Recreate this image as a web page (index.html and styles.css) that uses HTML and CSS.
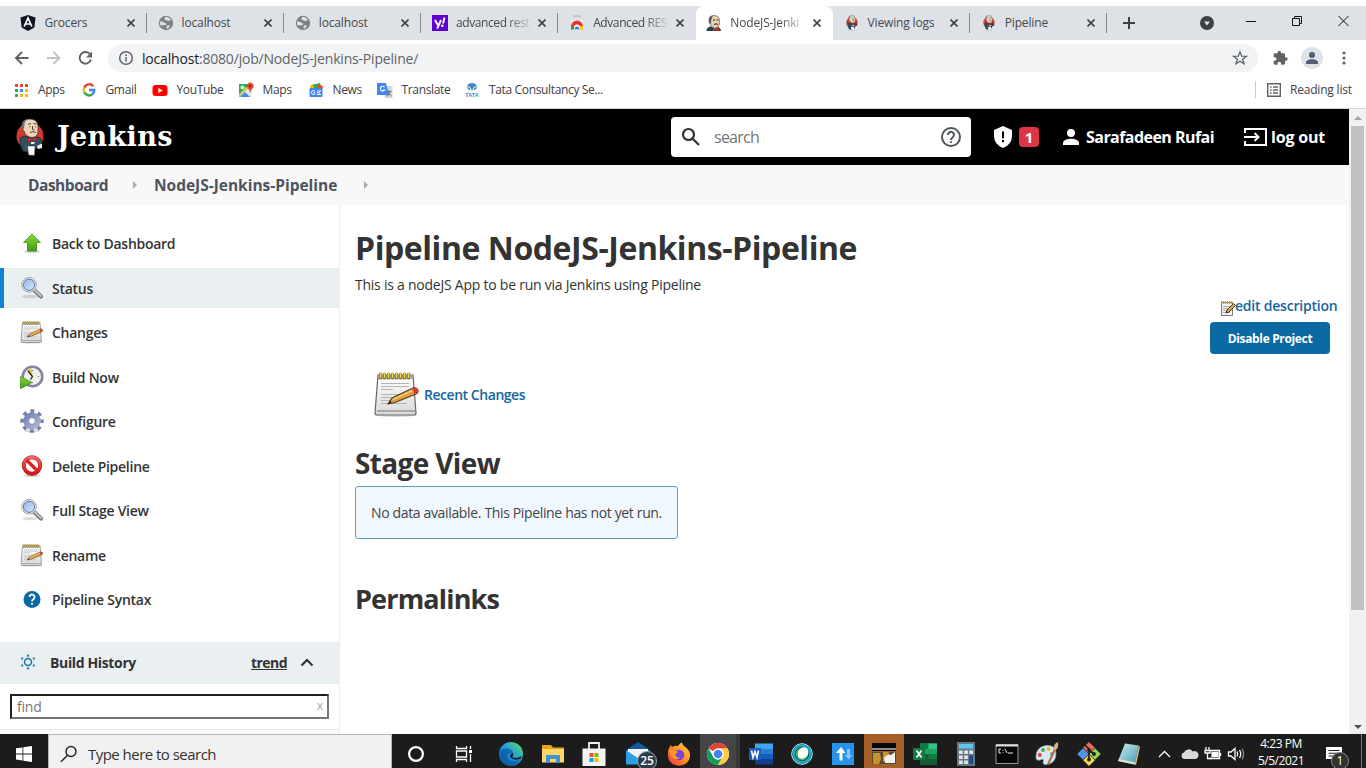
FILE: index.html
```html
<!DOCTYPE html>
<html lang="en">
<head>
<meta charset="utf-8">
<title>NodeJS-Jenkins-Pipeline [Jenkins]</title>
<link rel="stylesheet" href="styles.css">
</head>
<body>
<svg class="defs" width="0" height="0" aria-hidden="true">
  <defs>
    <linearGradient id="g-green" x1="0" y1="0" x2="0" y2="1"><stop offset="0" stop-color="#8fdc3c"/><stop offset="1" stop-color="#3f9d12"/></linearGradient>
    <linearGradient id="g-gear" x1="0" y1="0" x2="1" y2="1"><stop offset="0" stop-color="#6f86b8"/><stop offset="1" stop-color="#b3b4cf"/></linearGradient>
    <linearGradient id="g-red" x1="0" y1="0" x2="0" y2="1"><stop offset="0" stop-color="#ee6a66"/><stop offset="1" stop-color="#d01414"/></linearGradient>
    <linearGradient id="g-lens" x1="0" y1="0" x2="1" y2="1"><stop offset="0" stop-color="#8fb4e2"/><stop offset="1" stop-color="#d9eafb"/></linearGradient>
    <linearGradient id="g-paper" x1="0" y1="0" x2="0" y2="1"><stop offset="0" stop-color="#ffffff"/><stop offset="1" stop-color="#d8d8d8"/></linearGradient>
    <linearGradient id="g-edge" x1="0" y1="1" x2="1" y2="0"><stop offset="0" stop-color="#0c59a4"/><stop offset=".5" stop-color="#1b9de2"/><stop offset="1" stop-color="#66dd5a"/></linearGradient>
    <linearGradient id="g-fox" x1="1" y1="0" x2="0" y2="1"><stop offset="0" stop-color="#ffe14a"/><stop offset=".5" stop-color="#ff8a1e"/><stop offset="1" stop-color="#f0304f"/></linearGradient>
    <linearGradient id="g-note" x1="0" y1="0" x2="1" y2="1"><stop offset="0" stop-color="#cfeef2"/><stop offset="1" stop-color="#3f99ad"/></linearGradient>
  </defs>
  <symbol id="x" viewBox="0 0 8 8"><path d="M.5.5l7 7M7.500.5l-7 7" stroke="#3c4043" stroke-width="1.6"/></symbol>
  <symbol id="globe" viewBox="0 0 16 16"><circle cx="8" cy="8" r="7.200" fill="#7f8082"/><path d="M2 6.500C5 6 6 7.500 8 8.500c1 .6-.3 2-2 1.800C3.800 10 3 11 2.200 10zM7.500 1.800c2 .1 4.500 1 5.600 3.500-1.200-.5-1.800.8-3.200.6C8.500 5.700 8 5 6.800 4.800c-.8-.6 0-2 .7-3zM9 10.500c1.200-.6 2-.2 3 .3-.6 1.600-2 2.700-3.300 3.100-.2-1.200-.4-2.500.3-3.400z" fill="#dee1e6"/></symbol>
  <symbol id="butler" viewBox="0 0 28 38">
    <ellipse cx="14" cy="18" rx="13.500" ry="13.500" fill="#d33833"/>
    <path d="M4 20q5-3 9-1l4 1q6-2 8 1l1 6q-3 4-8 4l-1 3q-6 1-10-1-3-4-3-13z" fill="#335061" stroke="#14202a" stroke-width=".7"/>
    <path d="M6 8Q6 1 13.500 1q8 0 8.500 7v5q0 6-6 6.500-6-.5-8-6.500-2-1-2-6z" fill="#f0d6b7" stroke="#3b2f26" stroke-width=".7"/>
    <path d="M6 10Q4.500 3 11 1.500q-3 3-2.500 5.500l-.6 4z" fill="#68707a"/>
    <path d="M12 6.500l3-1M17.500 5.500l3 .5M16.500 8v3.500l2 .3M14 14.500q3-1.800 6 0M13.500 8.800h1M19 8.800h1" stroke="#231f20" stroke-width=".8" fill="none"/>
    <path d="M12 19.500l4 1.500 4-1.500 1 3.500-5-1-4 2z" fill="#d33833" stroke="#7a1916" stroke-width=".5"/>
    <path d="M11.500 28h7.500l-.5 9.500-6-.5z" fill="#fff" stroke="#333" stroke-width=".5"/><path d="M21 28l5-2.500v4.500l-4 1zM15 24h4l-1 2h-3z" fill="#f3f3f3"/>
  </symbol>
  <symbol id="lens" viewBox="0 0 24 24"><ellipse cx="10" cy="20.500" rx="8" ry="1.800" fill="#000" opacity=".13"/><path d="M13.500 13.500l7.500 7" stroke="#777" stroke-width="4.200" stroke-linecap="round"/><path d="M14 13.500l7 6.600" stroke="#c8c8c8" stroke-width="1.800" stroke-linecap="round"/><circle cx="9" cy="8.800" r="7.300" fill="#f4f4f4" stroke="#999" stroke-width=".9"/><circle cx="9" cy="8.800" r="5.600" fill="url(#g-lens)" stroke="#5479ad" stroke-width="1"/></symbol>
  <symbol id="notepad" viewBox="0 0 48 48"><ellipse cx="23" cy="45" rx="19" ry="2" fill="#000" opacity=".14"/><path d="M5 5h35l3 38q0 2-2 2H4q-2 0-2-2z" fill="url(#g-paper)" stroke="#666" stroke-width="1.200"/><path d="M4 41h38" stroke="#9a9a9a" stroke-width="1.500"/><path d="M5 5.500h35v3.500H5z" fill="#a8a8a8"/><path d="M7.500 4v4M11.500 4v4M15.500 4v4M19.500 4v4M23.500 4v4M27.500 4v4M31.500 4v4M35.500 4v4" stroke="#8a7216" stroke-width="3.200" stroke-linecap="round"/><path d="M7.500 3v5M11.500 3v5M15.500 3v5M19.500 3v5M23.500 3v5M27.500 3v5M31.500 3v5M35.500 3v5" stroke="#f0d848" stroke-width="1.500"/><path d="M8 13.500h28M8 16.500h28M8 19.500h12M8 24.500h27M8 27.500h22M8 30.500h10M8 33.500h26" stroke="#b5b5b5" stroke-width="1"/><path d="M15 34l4-6L40 18q4-1 5 2 .5 2.500-2 4L22 32.500z" fill="#d99f3f" stroke="#5c3d10" stroke-width="1.100"/><path d="M20 29.500l19-9" stroke="#f4cd78" stroke-width="1.500"/><path d="M39.500 18.300l1.500-.6q3-.8 4 2 .5 2.500-2 4l-1.500.6z" fill="#dd3a3a"/><path d="M15 34l2-3.500 1.500 2z" fill="#222"/></symbol>
  <symbol id="doc-small" viewBox="0 0 16 16"><path d="M1.500 2.500h11v13h-11z" fill="#f4f4f4" stroke="#777"/><path d="M1 2.500h12" stroke="#c8a827" stroke-width="3" stroke-dasharray="1.300 .7"/><path d="M3 6.500h7M3 8.500h5M3 10.500h4M3 12.500h7" stroke="#aaa"/><path d="M6 13l1-3 6.500-6.500 2 2L9 12z" fill="#dba74a" stroke="#4a3519" stroke-width="1"/></symbol>
</svg>

<div class="tabstrip">
  <div class="tab"><svg class="fav" viewBox="0 0 16 16"><path d="M8 0l7.500 2.600-1.100 10L8 16l-6.400-3.400L.5 2.600z" fill="#111722"/><path d="M4.200 11.500L8 3l3.800 8.500M5.800 9h4.400" fill="none" stroke="#fff" stroke-width="1.700"/></svg><span class="tt">Grocers</span><svg class="close"><use href="#x"/></svg></div>
  <div class="tab"><svg class="fav"><use href="#globe"/></svg><span class="tt">localhost</span><svg class="close"><use href="#x"/></svg></div>
  <div class="tab"><svg class="fav"><use href="#globe"/></svg><span class="tt">localhost</span><svg class="close"><use href="#x"/></svg></div>
  <div class="tab"><svg class="fav" viewBox="0 0 16 16"><path d="M0 0h16v16H0z" fill="#5f01d1"/><path d="M3 5l2.800 5M9 5l-3.800 8.500M12.500 2.500L11 8.500" stroke="#fff" stroke-width="1.900"/><circle cx="10.300" cy="10.800" r="1.200" fill="#fff"/></svg><span class="tt fade tight">advanced rest</span><svg class="close"><use href="#x"/></svg></div>
  <div class="tab nosep"><svg class="fav" viewBox="0 0 16 16"><path d="M2 5h12v9.500H2z" fill="#e9ebee"/><path d="M5.500 2.500V1h5v1.500" stroke="#c4c6c9" stroke-width="2" fill="none"/><path d="M2 14.500v-3a6 6 0 0 1 12 0v.5H8z" fill="#e33b2e"/><path d="M2 14.500v-4q2 0 3.500 4z" fill="#27a552"/><path d="M14 14.500v-3.500H9l1.500 3.500z" fill="#fbc116"/><circle cx="8" cy="12.500" r="2.900" fill="#fff"/><path d="M5.800 14.500a2.300 2.300 0 1 1 4.400 0z" fill="#3f7ee8"/></svg><span class="tt fade tight">Advanced RES</span><svg class="close"><use href="#x"/></svg></div>
  <div class="tab active"><svg class="fav" viewBox="0 0 16 16"><path d="M.5 16q0-4 4-4.500h6q4 .5 4.500 4.500z" fill="#26404f"/><path d="M3 5Q3 .5 8 .5t5.500 4.500v4Q13 13 9 13.300 5 12.500 4 9 3 8 3 5z" fill="#ecd0ae" stroke="#5c5148" stroke-width=".6"/><path d="M3.200 8Q1.500 1.500 7 .7 5 3 5 9z" fill="#4e5760"/><path d="M7 5h2M10.500 5h2M8 9.500q2-1.500 4 0" stroke="#222" fill="none"/><path d="M7 13l3 1 3-1v3l-3-1-3 1z" fill="#d32f2f"/></svg><span class="tt fade">NodeJS-Jenki</span><svg class="close"><use href="#x"/></svg></div>
  <div class="tab"><svg class="fav"><use href="#butler"/></svg><span class="tt">Viewing logs</span><svg class="close"><use href="#x"/></svg></div>
  <div class="tab"><svg class="fav"><use href="#butler"/></svg><span class="tt">Pipeline</span><svg class="close"><use href="#x"/></svg></div>
  <svg class="plus" viewBox="0 0 12 12"><path d="M6 0v12M0 6h12" stroke="#3c4043" stroke-width="2"/></svg>
  <svg class="caret" viewBox="0 0 14 14"><circle cx="7" cy="7" r="7" fill="#3c4043"/><path d="M4 5.500h6L7 9.500z" fill="#dee1e6"/></svg>
  <svg class="win" width="104" height="12" viewBox="0 0 104 12" fill="none" stroke="#111"><path d="M0 6.500h10"/><path d="M46.500 3.500h7v7h-7zM48.500 3.500v-2h7v7h-2"/><path d="M92.500 1l10 10M102.500 1l-10 10"/></svg>
</div>

<div class="toolbar">
  <svg class="nav" width="80" height="16" viewBox="0 0 80 16" fill="none" stroke="#5f6368" stroke-width="1.900"><path d="M14.500 8H2M8 2L2 8l6 6"/><path d="M33 8h12.500M39.500 2l6 6-6 6" stroke="#bdc1c6"/><path d="M76 4.200A5.800 5.800 0 1 0 77 9.500"/><path d="M78 1.500v6h-6z" fill="#5f6368" stroke="none"/></svg>
  <div class="omnibox">
    <svg width="16" height="16" viewBox="0 0 16 16" fill="none" stroke="#5f6368" stroke-width="1.500"><circle cx="8" cy="8" r="6.300"/><path d="M8 7v4.500M8 4.300v1.600"/></svg>
    <span class="url"><b>localhost</b>:8080/job/NodeJS-Jenkins-Pipeline/</span>
    <svg class="star" width="16" height="16" viewBox="0 0 16 16" fill="none" stroke="#5f6368" stroke-width="1.300"><path d="M8 1.800l1.700 4.400 4.700.2-3.700 2.900 1.300 4.500L8 11.200l-4 2.600 1.300-4.500L1.600 6.400l4.700-.2z"/></svg>
  </div>
  <svg class="puzzle" width="16" height="16" viewBox="0 0 24 24"><path fill="#5f6368" d="M21 11h-1.500V7a2 2 0 0 0-2-2h-4V3.500a2.500 2.500 0 0 0-5 0V5h-4a2 2 0 0 0-2 2v3.800H4a2.700 2.700 0 0 1 0 5.400H2.500V20a2 2 0 0 0 2 2h3.800v-1.500a2.700 2.700 0 0 1 5.400 0V22h3.800a2 2 0 0 0 2-2v-4H21a2.500 2.500 0 0 0 0-5z"/></svg>
  <svg class="avatar" width="22" height="22" viewBox="0 0 22 22"><circle cx="11" cy="11" r="11" fill="#dee1e6"/><circle cx="11" cy="8" r="3" fill="#535c75"/><path d="M5 17v-1.500C5 13 9 12.300 11 12.300s6 .7 6 3.200V17z" fill="#535c75"/></svg>
  <svg class="kebab" width="4" height="14" viewBox="0 0 4 14" fill="#5f6368"><circle cx="2" cy="2" r="1.600"/><circle cx="2" cy="7" r="1.600"/><circle cx="2" cy="12" r="1.600"/></svg>
</div>

<div class="bookmarks">
  <a class="bm b1"><svg viewBox="0 0 16 16"><path d="M2 2h3v3H2zM7 2h3v3H7zM12 2h3v3h-3z" fill="#ea4335"/><path d="M2 7h3v3H2zM2 12h3v3H2z" fill="#34a853"/><path d="M7 7h3v3H7z" fill="#4285f4"/><path d="M12 7h3v3h-3zM7 12h3v3H7zM12 12h3v3h-3z" fill="#fbbc04"/></svg><span>Apps</span></a>
  <a class="bm b2"><svg viewBox="0 0 16 16" fill="none" stroke-width="2.500"><path d="M12.300 4.200A5.300 5.300 0 0 0 3.300 5.700" stroke="#ea4335"/><path d="M3.300 5.700a5.300 5.300 0 0 0 0 4.700" stroke="#fbbc05"/><path d="M3.300 10.400a5.300 5.300 0 0 0 8.200 1.700" stroke="#34a853"/><path d="M11.500 12.100a5.300 5.300 0 0 0 1.800-4.100H8" stroke="#4285f4"/></svg><span>Gmail</span></a>
  <a class="bm b3"><svg viewBox="0 0 16 16"><rect x=".5" y="3" width="15" height="11" rx="3" fill="#f00"/><path d="M6.300 6l4.500 2.500-4.500 2.500z" fill="#fff"/></svg><span>YouTube</span></a>
  <a class="bm b4"><svg viewBox="0 0 16 16"><path d="M1 2h13v13H1z" fill="#34a853"/><path d="M1 15L13 3l1 1v11z" fill="#e8e8e8"/><path d="M2 15l5-5 5 5z" fill="#4285f4"/><path d="M1 13.500L12.500 2" stroke="#fbd14b" stroke-width="1.600"/><circle cx="4.500" cy="5.500" r="2" fill="#d6f3dd"/><path d="M12 11q-.3-3-2-4.500a3.300 3.300 0 1 1 4.500 0Q12.500 8 12 11z" fill="#ea4335"/><circle cx="12" cy="4.200" r="1.100" fill="#8c1d14"/></svg><span>Maps</span></a>
  <a class="bm b5"><svg viewBox="0 0 16 16"><path d="M3 3l9-2 2 6H3z" fill="#34a853"/><path d="M2 4l3-1 1 4H2z" fill="#fbbc04"/><path d="M10 2.500l5 1.500-1 4h-4z" fill="#ea4335"/><rect x="1.500" y="6" width="13" height="9" rx="1" fill="#4285f4"/><path d="M7 9.300a2 2 0 1 0 0 2.500v-1H5.500M9 9h4M9 10.800h3M9 12.500h4" stroke="#fff" fill="none"/></svg><span>News</span></a>
  <a class="bm b6"><svg viewBox="0 0 16 16"><path d="M5 4h10.500v12H8z" fill="#d6d8da"/><path d="M0 1h9l3 12H0z" fill="#4285f4"/><path d="M7.500 5a2.400 2.400 0 1 0 .3 3H5.500" stroke="#fff" stroke-width="1.100" fill="none"/><path d="M9.500 9.500h5M12 8v1.500M13.500 9.500q-1 3.500-4 4.500M11 10q1 3 3.500 4" stroke="#69777d" fill="none"/></svg><span>Translate</span></a>
  <a class="bm b7"><svg viewBox="0 0 16 16"><ellipse cx="8" cy="4.800" rx="5" ry="3.700" fill="#3d8cc4"/><path d="M7.300 9q0-4-3.800-4.500M8.700 9q0-4 3.800-4.500" stroke="#fff" stroke-width="1" fill="none"/><text x="1.200" y="14.500" class="tata">TATA</text></svg><span>Tata Consultancy Se...</span></a>
  <a class="bm reading"><svg viewBox="0 0 16 16" fill="none" stroke="#5f6368" stroke-width="1.400"><path d="M1.700 1.700h12.600v12.600H1.700z"/><path d="M4 5h1.500M7 5h5M4 8h1.500M7 8h5M4 11h1.500M7 11h5"/></svg><span>Reading list</span></a>
</div>

<div class="viewport">
  <div class="page">
    <header class="jheader">
      <svg class="mascot"><use href="#butler"/></svg>
      <span class="wordmark">Jenkins</span>
      <div class="search">
        <svg width="20" height="20" viewBox="0 0 20 20" fill="none" stroke="#333" stroke-width="2.200"><circle cx="7.500" cy="7.500" r="5.500"/><path d="M11.500 11.500l6.500 6.500"/></svg>
        <span class="ph">search</span>
        <svg width="22" height="22" viewBox="0 0 22 22" fill="none" stroke="#4d545d" stroke-width="2"><circle cx="11" cy="11" r="9"/><path d="M8 9a3 3 0 1 1 4.800 2.200Q11 12.500 11 14M11 15.200v1.900"/></svg>
      </div>
      <svg class="shield" width="20" height="22" viewBox="0 0 20 22"><path d="M10 0l9 4v6q0 8.500-9 12Q1 18.500 1 10V4z" fill="#fff"/><path d="M10 5.500v7M10 14v2.300" stroke="#000" stroke-width="2"/></svg>
      <span class="alert">1</span>
      <svg class="user" width="18" height="18" viewBox="0 0 18 18" fill="#fff"><circle cx="9" cy="5" r="4"/><path d="M1 17v-2c0-3 5-4.300 8-4.300s8 1.300 8 4.300v2z"/></svg>
      <span class="hl">Sarafadeen Rufai</span>
      <svg class="out" width="23" height="18" viewBox="0 0 23 18" fill="none" stroke="#fff" stroke-width="2"><path d="M1 5V1h21v16H1v-4M0 9h14M10.500 5l4 4-4 4"/></svg>
      <span class="hl logout">log out</span>
    </header>
    <nav class="crumbs"><span class="c1">Dashboard</span><i></i><span class="c2">NodeJS-Jenkins-Pipeline</span><i></i></nav>
    <div class="cols">
      <aside class="side">
        <div class="tasks">
          <a class="task"><svg viewBox="0 0 24 24"><ellipse cx="12" cy="20.500" rx="8" ry="1.500" fill="#000" opacity=".2"/><path d="M12 3l8.500 8.500h-4v8.500h-9v-8.500h-4z" fill="url(#g-green)" stroke="#3a8a14" stroke-width=".8"/></svg><span>Back to Dashboard</span></a>
          <a class="task on"><svg><use href="#lens"/></svg><span>Status</span></a>
          <a class="task"><svg><use href="#notepad"/></svg><span>Changes</span></a>
          <a class="task"><svg viewBox="0 0 24 24"><circle cx="12.500" cy="11.500" r="9.800" fill="#f0f0ee" stroke="#85859f" stroke-width="2.600"/><path d="M12.500 11.500L7 5.500q2-1.700 5-1.700z" fill="#e3c64a"/><path d="M8 6l4.500 5.500-2 3" stroke="#222" stroke-width="1.300" fill="none"/><path d="M12.500 5v1M19 11.500h-1M12.500 18v-1" stroke="#777"/><path d="M.5 11.500l11.500 6-11.500 6.200z" fill="url(#g-green)" stroke="#3a8a14" stroke-width=".7"/></svg><span>Build Now</span></a>
          <a class="task"><svg viewBox="0 0 24 24"><ellipse cx="12" cy="22" rx="8" ry="1.500" fill="#000" opacity=".15"/><circle cx="12" cy="12" r="9.700" fill="none" stroke="#7580b0" stroke-width="4" stroke-dasharray="3.810 3.810" stroke-dashoffset="1.900"/><circle cx="12" cy="12" r="6" fill="none" stroke="url(#g-gear)" stroke-width="5.500"/><circle cx="12" cy="12" r="3.300" fill="#fff" stroke="#7880a8" stroke-width=".8"/></svg><span>Configure</span></a>
          <a class="task"><svg viewBox="0 0 24 24"><ellipse cx="12" cy="21.500" rx="8" ry="1.500" fill="#000" opacity=".2"/><circle cx="12" cy="11.500" r="8.200" fill="#fff" stroke="#b91515" stroke-width="4"/><circle cx="12" cy="11.500" r="8.200" fill="none" stroke="url(#g-red)" stroke-width="3"/><path d="M6.500 6l11 11" stroke="#d92525" stroke-width="3.400"/></svg><span>Delete Pipeline</span></a>
          <a class="task"><svg><use href="#lens"/></svg><span>Full Stage View</span></a>
          <a class="task"><svg><use href="#notepad"/></svg><span>Rename</span></a>
          <a class="task"><svg viewBox="0 0 24 24"><circle cx="12" cy="12.500" r="8.500" fill="#0b6aa2"/><path d="M9.500 10a2.500 2.500 0 1 1 4 2Q12 13 12 14.500M12 16v1.700" stroke="#fff" stroke-width="1.800" fill="none"/></svg><span>Pipeline Syntax</span></a>
        </div>
        <div class="bh">
          <svg width="16" height="16" viewBox="0 0 16 16" fill="none" stroke="#1a73a8" stroke-width="1.500"><circle cx="8" cy="8" r="3.500"/><path d="M8 0l1.700 2.400H6.300zM8 16l1.700-2.400H6.300zM.8 3.500l2.800.3-1.500 2.600zM15.200 3.500l-2.800.3 1.500 2.600zM.8 12.500l2.800-.3-1.500-2.600zM15.200 12.500l-2.800-.3 1.500-2.600z" fill="#1a73a8" stroke="none"/></svg>
          <b>Build History</b><u>trend</u>
          <svg class="chev" width="14" height="9" viewBox="0 0 14 9" fill="none" stroke="#333" stroke-width="2.200"><path d="M1.500 7.500L7 2l5.500 5.500"/></svg>
        </div>
        <div class="find"><span>find</span><em>x</em></div>
        <div class="below"></div>
      </aside>
      <main class="main">
        <h1>Pipeline NodeJS-Jenkins-Pipeline</h1>
        <p class="desc">This is a nodeJS App to be run via Jenkins using Pipeline</p>
        <div class="actions">
          <a class="edit"><svg width="16" height="16"><use href="#doc-small"/></svg><span>edit description</span></a>
          <button class="btn">Disable Project</button>
        </div>
        <a class="recent"><svg width="48" height="48"><use href="#notepad"/></svg><span>Recent Changes</span></a>
        <h2>Stage View</h2>
        <div class="nodata">No data available. This Pipeline has not yet run.</div>
        <h2 class="perma">Permalinks</h2>
      </main>
    </div>
  </div>
  <div class="scroll"><i class="up"></i><div class="thumb"></div><i class="down"></i></div>
</div>

<div class="taskbar">
  <div class="start"><svg width="16" height="16" viewBox="0 0 16 16" fill="#fff"><path d="M0 2.300l6.500-.9v6.100H0zM7.300 1.300L16 0v7.500H7.300zM0 8.400h6.500v6.100L0 13.600zM7.300 8.400H16V16l-8.700-1.300z"/></svg></div>
  <div class="tsearch"><svg width="18" height="18" viewBox="0 0 18 18" fill="none" stroke="#222" stroke-width="1.400"><circle cx="11" cy="6.500" r="5"/><path d="M7.500 10.200L1 16.800"/></svg><span>Type here to search</span></div>
  <div class="apps">
    <div class="app a1"><svg viewBox="0 0 24 24"><circle cx="12" cy="12" r="6.900" fill="none" stroke="#fff" stroke-width="2.200"/></svg></div>
    <div class="app a2"><svg viewBox="0 0 24 24" fill="none" stroke="#fff" stroke-width="1.300"><path d="M4.500 4v2.500h10V4M4.500 9h10v6h-10zM4.500 20v-2.500h10V20M18.500 4v3M18.500 12v8"/><path d="M18.500 8v3" stroke-width="3"/></svg></div>
    <div class="app a3"><svg viewBox="0 0 24 24"><circle cx="12" cy="12" r="12" fill="url(#g-edge)"/><path d="M.3 12Q2 5.500 9 6.500q5 1 5 5.500-4-2-5.500 1.500Q8 18.500 14 19q5 .5 8-2.500Q18 24 11 24 1 22.500.3 12z" fill="#0c59a4" opacity=".75"/><path d="M14 11q1 2-1 4 5 2.500 9.500-1l-.5 2.500q-6 2.500-10-.5-3-3 2-5z" fill="#1c1c1c"/></svg></div>
    <div class="app a4"><svg viewBox="0 0 24 24"><path d="M1 3h9l2 2.500h11V20H1z" fill="#e8a317"/><path d="M1 7h22v13.500H1z" fill="#ffd766"/><path d="M5 21v-8h14v8h-4v-4H9v4z" fill="#3f94d8"/></svg></div>
    <div class="app a5"><svg viewBox="0 0 24 24"><path d="M7 7V1h10v6" fill="none" stroke="#eee" stroke-width="1.800"/><path d="M.5 6.500h23V24H.5z" fill="#f4f4f4"/><path d="M7.500 11h4v4h-4z" fill="#f25022"/><path d="M12.500 11h4v4h-4z" fill="#7fba00"/><path d="M7.500 16h4v4h-4z" fill="#00a4ef"/><path d="M12.500 16h4v4h-4z" fill="#ffb900"/></svg></div>
    <div class="app a6"><svg viewBox="0 0 24 24"><path d="M0 8l12-8 12 8v14H0z" fill="#0f5ba8"/><path d="M2 7h20v6l-10 5L2 13z" fill="#fff"/><path d="M0 8l12 8 12-8v14.500H0z" fill="#2d9fe6"/><path d="M2 7.500h20L12 14z" fill="#f2f2f2"/></svg><span class="count">25</span></div>
    <div class="app a7"><svg viewBox="0 0 24 24"><path d="M2 6l2-3 1 2q3-2 6-1Q13 1 15 .3q0 3 4 5.200Q23.500 9 23 14q-1 9-11 9.700Q2 23 1 14 .5 9 2 6z" fill="url(#g-fox)"/><circle cx="12" cy="13" r="5.200" fill="#7544dd"/><path d="M2 8q4-1 6 1l3 .5q-1 2-3 2.500 1 4 5 3.500-3 3-7 .5-3-3-4-8z" fill="#ff9a22"/></svg></div>
    <div class="app a8 current"><svg viewBox="0 0 24 24"><circle cx="12" cy="12" r="11" fill="#fff"/><path d="M12 1a11 11 0 0 1 9.530 5.500H12a5.500 5.500 0 0 0-4.760 2.750L2.470 6.500A11 11 0 0 1 12 1z" fill="#db4437"/><path d="M2.470 6.500A11 11 0 0 0 12 23l4.760-8.250A5.500 5.500 0 0 1 7.240 14.750z" fill="#0f9d58"/><path d="M21.530 6.500A11 11 0 0 1 12 23l4.760-8.250A5.500 5.500 0 0 0 12 6.500z" fill="#ffcd40"/><circle cx="12" cy="12" r="5.500" fill="#fff"/><circle cx="12" cy="12" r="4.300" fill="#4285f4"/></svg></div>
    <div class="app a9"><svg viewBox="0 0 24 24"><path d="M6 1.500h18v5.500H6z" fill="#41a5ee"/><path d="M6 7h18v5H6z" fill="#2b7cd3"/><path d="M6 12h18v5H6z" fill="#185abd"/><path d="M6 17h18v5.500H6z" fill="#103f91"/><path d="M0 6h12v12H0z" fill="#185abd"/><path d="M2.500 8.500l1.500 7 2-6 2 6 1.500-7" fill="none" stroke="#fff" stroke-width="1.600"/></svg></div>
    <div class="app a10"><svg viewBox="0 0 24 24"><circle cx="12" cy="12" r="10.300" fill="#0b3d53" stroke="#d5edf2" stroke-width="1"/><circle cx="12" cy="12" r="8.500" fill="none" stroke="#16abc6" stroke-width="2.600"/><circle cx="12" cy="12" r="6.500" fill="#4fae5b"/><ellipse cx="13" cy="11" rx="5" ry="6" transform="rotate(35 13 11)" fill="#fff"/></svg></div>
    <div class="app a11"><svg viewBox="0 0 24 24"><path d="M1 1h22v22H1z" fill="#2793ec"/><path d="M8.500 18.500h3V11h3L10 5l-5 6h3.500z" fill="#fff"/><path d="M16 7h3v6h2.300l-3.800 4.500L13.700 13H16z" fill="#8fc4f3"/></svg></div>
    <div class="app a12 flash"><svg viewBox="0 0 24 24"><path d="M0 1h24v8H0z" fill="#090909"/><path d="M0 7h24" stroke="#bbb" stroke-width="1.500"/><path d="M0 10h24v12H0z" fill="#55483e"/><path d="M1 22V11h7l1 6-2 5zM11 20V10h6l-1 7z" fill="#c79427"/><path d="M12 16q4-5 7-3l4-3v11H13z" fill="#f2f0ec"/></svg></div>
    <div class="app a13"><svg viewBox="0 0 24 24"><path d="M7 1.500h17v21H7z" fill="#21a366"/><path d="M7 1.500h8.500V7H7z" fill="#107c41"/><path d="M7 12h17v10.500H7z" fill="#185c37"/><path d="M15.500 12H24v5h-8.500z" fill="#107c41"/><path d="M15.500 1.500H24V7h-8.500z" fill="#33c481"/><path d="M0 6h12v12H0z" fill="#107c41"/><path d="M3.500 8.500l5 7M8.500 8.500l-5 7" stroke="#fff" stroke-width="1.700"/></svg></div>
    <div class="app a14"><svg viewBox="0 0 24 24"><path d="M3 0h18v24H3z" fill="#687784"/><path d="M5 2h14v4.500H5z" fill="#58c9f2"/><path d="M5 8.500h3.700v3.500H5zM10.200 8.500h3.700v3.500h-3.700zM15.300 8.500H19v3.500h-3.700zM5 13.500h3.700V17H5zM10.200 13.500h3.700V17h-3.700zM5 18.500h3.700V22H5zM10.200 18.500h3.700V22h-3.700z" fill="#dfe6ec"/><path d="M15.300 13.500H19V22h-3.700z" fill="#164b8f"/></svg></div>
    <div class="app a15"><svg viewBox="0 0 24 24"><path d="M1 2.500h22v19H1z" fill="#060606" stroke="#999" stroke-width="1"/><path d="M1 3.500h22" stroke="#ddd" stroke-width="2"/><path d="M6 7H4v4h2M8 8v.8M8 10v.8M10 7l2 4M13 11h5" stroke="#eee" stroke-width="1" fill="none"/></svg></div>
    <div class="app a16"><svg viewBox="0 0 24 24"><path d="M1 15Q1 5 11 3.500q10-.5 10 8 0 10-10 11-4 0-2.500-3.500Q9 16 5 18q-4 1-4-3z" fill="#d9e8f3" stroke="#8aa9bf" stroke-width=".8"/><circle cx="4.800" cy="13" r="2" fill="#e23d34"/><circle cx="8" cy="8" r="2" fill="#48a94b"/><circle cx="13.500" cy="7" r="2" fill="#f1b624"/><circle cx="17" cy="12" r="1.800" fill="#3b7fd4"/><path d="M13 22.500L20 7" stroke="#b5723a" stroke-width="2.200"/><path d="M18.500 7q0-5 4-7 2 4-1.500 8z" fill="#dcb27c"/></svg></div>
    <div class="app a17"><svg viewBox="0 0 24 24"><path d="M12 0l5.800 5.800L12 11.600 6.200 5.800z" fill="#ef6b5d"/><path d="M6 6.200l5.800 5.800L6 17.800.2 12z" fill="#4f94e8"/><path d="M18 6.200l5.800 5.800-5.800 5.800-5.800-5.800z" fill="#8bd650"/><path d="M12 12.400l5.800 5.800L12 24l-5.800-5.800z" fill="#f7d44d"/><path d="M8 3l4 4v11M12 8l5 4" stroke="#222" stroke-width="1.700" fill="none"/><circle cx="12" cy="8" r="1.900" fill="#222"/><circle cx="12" cy="17.500" r="1.900" fill="#222"/><circle cx="17" cy="12" r="1.900" fill="#222"/></svg></div>
    <div class="app a18"><svg viewBox="0 0 24 24"><path d="M8 1.500l14 2-4.500 19L1 19z" fill="url(#g-note)"/><path d="M22 3.500l1 1.500-4 18-1.500-.5z" fill="#d3bd8c"/><path d="M1 19l16.500 3.500.5-2L2 17z" fill="#e8e2d0"/></svg></div>
  </div>
  <svg class="tray" width="104" height="24" viewBox="0 0 104 24" fill="none" stroke="#fff" stroke-width="1.300"><path d="M10 15l5.500-5.500L21 15"/><path d="M35 17a3.300 3.300 0 0 1 0-6.400 5 5 0 0 1 8.700-1.200A4 4 0 0 1 47 17z" fill="#d8d8d8" stroke="none"/><path d="M60.500 8.500h10v8h-10"/><path d="M63 10.500h6v4h-6z" fill="#fff"/><path d="M71.500 11v3M57 5v3M60 5v3M56 8.500h5v2.500h-5zM58.500 11v5.500h4"/><path d="M79.500 10h2.500l4-3.500v11L82 14h-2.500z"/><path d="M88 9.500q1.500 2.500 0 5M90.500 8q2.500 4 0 8"/><path d="M93 6.500q3.300 5.500 0 11" stroke="#888"/></svg>
  <div class="clock"><span>4:23 PM</span><span>5/5/2021</span></div>
  <div class="notif"><svg width="20" height="20" viewBox="0 0 20 20"><path d="M1 2h16v12h-6l-4 4v-4H1z" fill="#fff"/><path d="M3.500 5.500h11M3.500 8.200h11M3.500 11h7" stroke="#222" stroke-width="1.100"/></svg><span class="ncount">1</span></div>
  <div class="peek"></div>
</div>
</body>
</html>
```
FILE: styles.css
```css
* { box-sizing: border-box; }
body { margin: 0; padding-top: 6px; width: 1366px; height: 768px; overflow: hidden; background: #fff; font-family: "Open Sans", "Noto Sans", sans-serif; color: #333; display: flex; flex-direction: column; }
svg { display: block; flex: none; }
.defs { position: absolute; }

.tabstrip { height: 34px; flex: none; background: #dee1e6; display: flex; align-items: center; padding-left: 9.6px; font-size: 12px; color: #45494d; }
.tab { width: 137.200px; height: 34px; flex: none; display: flex; align-items: center; padding: 0 0 1px 10.8px; background: linear-gradient(#868a8f, #868a8f) no-repeat right 0 top 7px / 1px 20px; }
.tab.nosep { background: none; }
.tab.active { background: #fff; border-radius: 8px 8px 0 0; }
.fav { width: 16px; height: 16px; }
.tt { width: 74px; margin-left: 8px; white-space: nowrap; letter-spacing: -0.150px; }
.tt.tight { letter-spacing: -0.400px; }
.tt.fade { -webkit-mask-image: linear-gradient(90deg, #000 50px, transparent 78px); mask-image: linear-gradient(90deg, #000 50px, transparent 78px); }
.close { width: 8px; height: 8px; margin-left: 8.500px; }
.plus { width: 12px; height: 12px; margin-left: 16px; }
.caret { width: 14px; height: 14px; margin-left: 65px; }
.win { margin: -5px 0 0 32px; }

.toolbar { height: 36px; flex: none; display: flex; align-items: center; padding-left: 14px; }
.omnibox { width: 1150px; height: 28px; margin-left: 14px; padding: 0 10px; border-radius: 14px; background: #f1f3f4; display: flex; align-items: center; }
.url { margin-left: 8px; font-size: 14px; color: #5f6368; white-space: nowrap; letter-spacing: -0.190px; }
.url b { font-weight: 400; color: #202124; }
.star { margin-left: auto; }
.puzzle { margin-left: 14px; }
.avatar { margin-left: 13px; }
.kebab { margin-left: 19px; }

.bookmarks { height: 33px; flex: none; display: flex; align-items: center; padding: 0 14px 5px 13px; border-bottom: 1px solid #d5d7da; font-size: 12px; color: #3c4043; letter-spacing: -0.350px; }
.bm { display: flex; align-items: center; gap: 9px; white-space: nowrap; }
.bm svg { width: 16px; height: 16px; }
.b1 { width: 67.500px; }
.b2 { width: 71px; }
.b3 { width: 86px; }
.b4 { width: 70px; }
.b5 { width: 69px; }
.b6 { width: 87.500px; }
.tata { font: 700 5.500px "Liberation Sans", sans-serif; letter-spacing: 0; fill: #3d8cc4; }
.reading { margin-left: auto; padding-left: 10px; border-left: 1px solid #c8cacd; letter-spacing: -0.200px; gap: 8px; }
.reading span { width: 62px; }

.viewport { flex: none; height: 625px; display: flex; }
.page { width: 1349px; display: flex; flex-direction: column; overflow: hidden; }
.jheader { height: 56px; flex: none; background: #000; display: flex; align-items: center; padding-left: 16px; color: #fff; white-space: nowrap; }
.mascot { width: 28px; height: 38px; }
.wordmark { flex: none; width: 116px; margin-left: 13px; font: 700 27px/36px "DejaVu Serif", serif; letter-spacing: 0.330px; }
.search { flex: none; width: 300px; height: 40px; margin-left: 498px; padding: 0 9px 0 10px; background: #fff; border-radius: 4px; display: flex; align-items: center; }
.ph { flex: 1; margin-left: 13px; font-size: 16px; letter-spacing: -0.750px; color: #757575; }
.shield { margin-left: 22px; }
.alert { flex: none; width: 20px; height: 20px; margin-left: 6px; border-radius: 4px; background: #dc3545; font-weight: 700; font-size: 15px; line-height: 20px; text-align: center; }
.user { margin-left: 23px; }
.hl { flex: none; margin-left: 6px; width: 129px; font-size: 16px; font-weight: 700; letter-spacing: -0.550px; }
.out { margin-left: 29px; }
.hl.logout { margin-left: 4px; width: 56px; letter-spacing: -0.190px; }
.crumbs { height: 40px; flex: none; background: #f8f8f8; display: flex; align-items: center; padding-left: 28px; font-size: 15.500px; font-weight: 700; color: #4d545d; white-space: nowrap; }
.c1 { width: 81px; letter-spacing: -0.480px; }
.c2 { width: 186px; letter-spacing: -0.020px; }
.crumbs i { border: 4px solid transparent; border-left-color: #aaa; border-right: 0; margin: 0 17px 0 24px; }
.cols { flex: 1; display: flex; min-height: 0; }
.side { width: 340px; border-right: 1px solid #ecedee; padding-top: 18.500px; display: flex; flex-direction: column; }
.tasks { display: flex; flex-direction: column; gap: 4.500px; }
.task { height: 40px; padding: 0 0 0 20px; display: flex; align-items: center; gap: 8px; font-size: 14px; font-weight: 550; letter-spacing: -0.270px; }
.task svg { width: 24px; height: 24px; margin-top: -1px; }
.task.on { background: #eaeff2; border-left: 4px solid #0b87d2; padding-left: 16px; }
.bh { height: 42px; margin-top: 22.500px; padding: 0 0 2px 20px; background: #eaeff2; display: flex; align-items: center; font-size: 14px; letter-spacing: -0.360px; }
.bh b { width: 201px; margin-left: 14px; }
.bh u { width: 36px; font-weight: 700; letter-spacing: -0.560px; }
.chev { margin-left: 13px; }
.find { height: 25px; margin: 10px 10px 0; border: 2px solid; border-color: #1e1e1e #767676 #767676 #1e1e1e; padding: 0 4px 0 5px; display: flex; align-items: center; justify-content: space-between; font-size: 14px; letter-spacing: -0.200px; color: #757575; }
.find em { font-style: normal; font-size: 13px; color: #aaa; line-height: 16px; margin-top: -3px; }
.below { flex: 1; margin-top: 10px; border-top: 1px solid #e6e9eb; background: #f8f9f9; }
.main { flex: 1; padding: 21px 15px 0; display: flex; flex-direction: column; align-items: flex-start; white-space: nowrap; }
h1, h2, p { margin: 0; }
h1 { font-size: 32px; line-height: 44px; letter-spacing: -0.440px; }
.desc { font-size: 14px; line-height: 20px; margin-top: 5px; letter-spacing: -0.240px; }
.actions { align-self: flex-end; display: flex; flex-direction: column; align-items: flex-end; margin-top: 1px; }
.edit { display: flex; align-items: center; height: 20px; font-size: 14px; font-weight: 550; color: #1466a0; letter-spacing: -0.220px; }
.edit svg { margin-top: 3px; }
.edit span { width: 99px; margin: -1px 0 0 -1px; }
.btn { width: 120px; height: 32px; margin: 6px 4px 0 0; padding: 0; border: 0; border-radius: 4px; background: #0b6aa2; color: #fff; font: 700 12px "Open Sans", sans-serif; letter-spacing: -0.350px; }
.recent { display: flex; align-items: center; margin: 16px 0 0 18px; gap: 3px; font-size: 14px; font-weight: 600; color: #1466a0; letter-spacing: -0.460px; }
h2 { font-size: 28px; line-height: 36px; margin-top: 27px; letter-spacing: -0.640px; }
.nodata { width: 323px; height: 53px; margin-top: 5px; border: 1px solid #5b9fcb; border-radius: 3px; background: #f0f8fe; padding-left: 15px; font-size: 14px; line-height: 52px; letter-spacing: -0.350px; color: #444; }
h2.perma { margin-top: 42px; font-size: 27px; letter-spacing: -0.830px; }
.scroll { width: 17px; background: #f1f1f1; display: flex; flex-direction: column; align-items: center; }
.scroll i { border: 4px solid transparent; }
.scroll .up { margin-top: 3px; border-bottom-color: #a3a3a3; }
.thumb { width: 13px; height: 484px; margin-top: 6px; background: #c1c1c1; }
.scroll .down { margin: auto 0 1px; border-top-color: #505050; }

.taskbar { height: 34px; flex: none; overflow: hidden; background: #1c1c1c; display: flex; align-items: flex-start; }
.start { flex: none; width: 48px; height: 40px; padding: 12px 16px; }
.tsearch { flex: none; width: 344px; height: 40px; border: 1px solid #b8b8b8; background: #f1f1f1; display: flex; align-items: center; padding-left: 11px; gap: 10px; font-size: 15px; letter-spacing: -0.530px; color: #333; white-space: nowrap; }
.apps { display: flex; flex: none; }
.app { flex: none; width: 42px; height: 40px; display: flex; justify-content: center; align-items: center; position: relative; }
.app svg { width: 24px; height: 24px; }
.a1, .a3 { width: 48px; }
.a2 { width: 47px; }
.a4, .a8 { width: 36px; }
.a5, .a9, .a17 { width: 46px; }
.a6 { width: 41px; }
.a10, .a12, .a14 { width: 40px; }
.a16 { width: 38px; }
.a18 { width: 34px; }
.current { background: #454545; }
.a9 { border-left: 4px solid #383838; }
.flash { background: #a65f27; }
.count { position: absolute; left: 20px; top: 17px; width: 20px; height: 20px; border: 1px solid #9aa4ac; border-radius: 10px; background: #2b3d4c; color: #fff; font-size: 12px; font-weight: 600; line-height: 17px; text-align: center; }
.tray { margin: 8px 0 0 3px; }
.clock { flex: none; width: 56px; display: flex; flex-direction: column; align-items: center; padding-top: 1px; color: #fff; font-size: 12px; line-height: 17px; letter-spacing: -0.480px; white-space: nowrap; }
.notif { flex: none; position: relative; width: 52px; padding: 11px 0 0 16px; height: 40px; }
.ncount { position: absolute; left: 22px; top: 18px; width: 18px; height: 18px; border: 1px solid #888; border-radius: 9px; background: #333; color: #fff; font-size: 12px; line-height: 15px; text-align: center; }
.peek { height: 40px; border-left: 1px solid #777; }
```
